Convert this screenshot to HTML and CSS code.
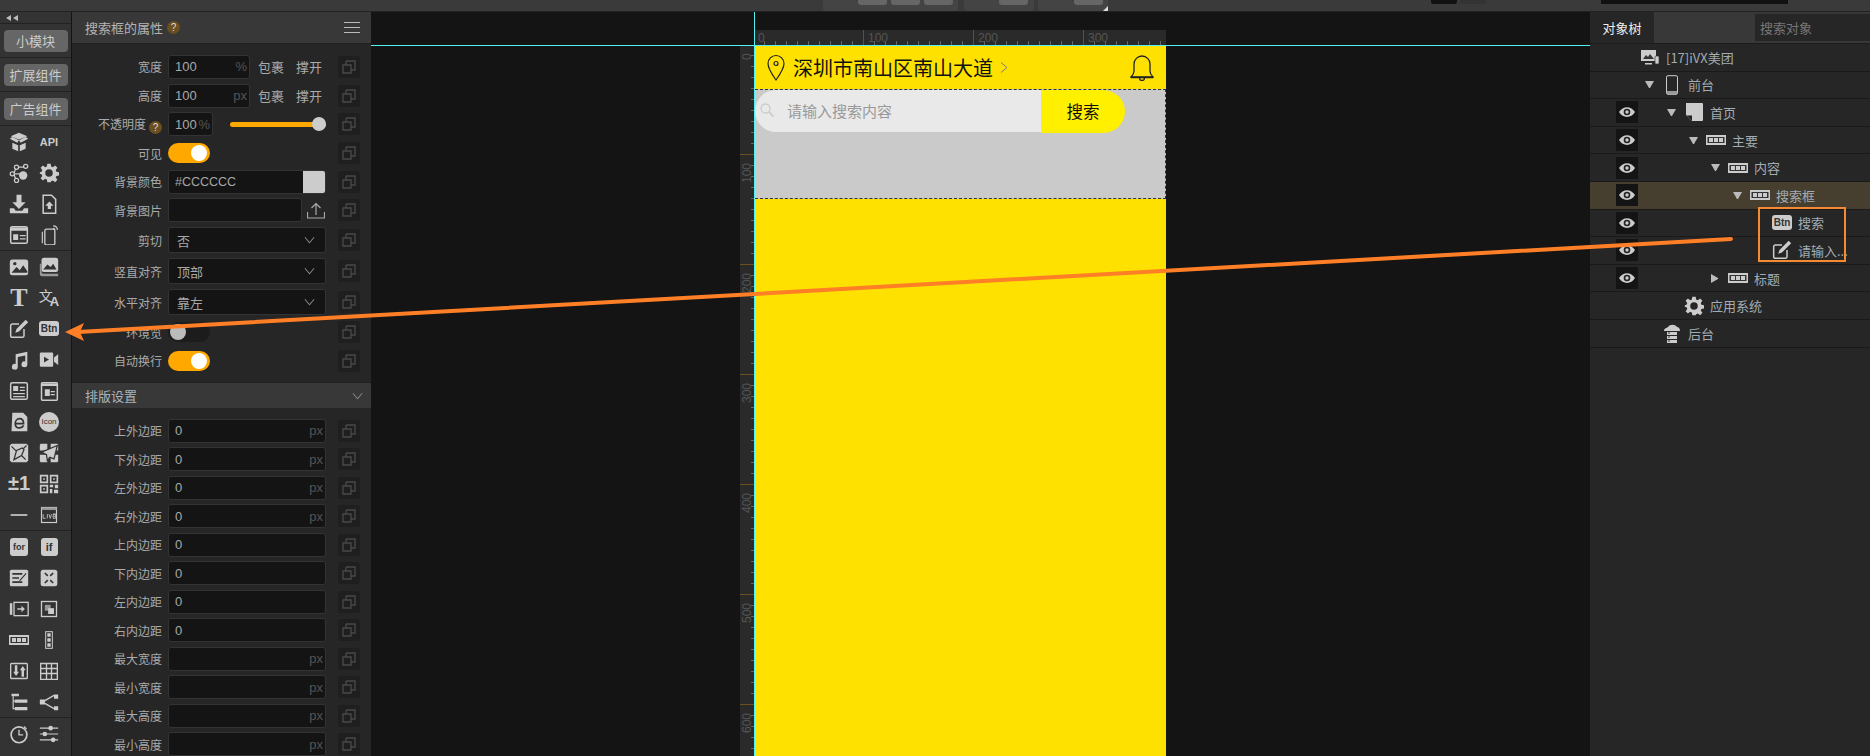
FILE: index.html
```html
<!DOCTYPE html>
<html lang="en">
<head>
    <meta charset="UTF-8">
    <title>iVX</title>
    <link rel="stylesheet" href="styles.css">
</head>
<body>
<svg class="defs" width="0" height="0">
    <symbol id="copy" viewBox="0 0 22 22"><path d="M8 5h9v9h-4M5 9h8v8H5zM8 5v4" fill="none" stroke="#4a4a4a" stroke-width="1.3"/></symbol>
    <symbol id="eye" viewBox="0 0 22 22"><path d="M3 11c4-6.500 12-6.500 16 0-4 6.500-12 6.500-16 0z" fill="#ccc"/><circle cx="11" cy="11" r="3.300" fill="#222"/><circle cx="11" cy="11" r="1.700" fill="#ccc"/></symbol>
    <symbol id="chev" viewBox="0 0 12 8"><path d="M1 1l5 6 5-6" fill="none" stroke="#888" stroke-width="1.100"/></symbol>
    <symbol id="gear" viewBox="0 0 24 24"><path fill="#ccc" fill-rule="evenodd" d="M10 1h4l.6 3.200 2 .8L19.300 3l2.800 2.800-2 2.700.8 2 3.100.5v4l-3.100.5-.8 2 2 2.700-2.800 2.800-2.700-2-2 .8L14 23h-4l-.6-3.200-2-.8L4.700 21l-2.800-2.800 2-2.700-.8-2L1 13v-2l2.100-.5.8-2-2-2.700L4.700 3l2.700 2 2-.8zM12 7.500a4.500 4.500 0 1 0 0 9 4.500 4.500 0 0 0 0-9z"/></symbol>
    <symbol id="edit" viewBox="0 0 24 24"><path d="M18 12v8a2 2 0 0 1-2 2H4a2 2 0 0 1-2-2V8a2 2 0 0 1 2-2h8" fill="none" stroke="#ccc" stroke-width="1.800"/><path d="M20 1l3 3-11 11-4.500 1.500L9 12z" fill="#ccc"/></symbol>
    <symbol id="dots" viewBox="0 0 20 10"><path d="M0 0h20v10H0z" fill="#ccc"/><path d="M1.500 2h17v6h-17z" fill="#333"/><path d="M3 3h4v4H3zM8 3h4v4H8zM13 3h4v4h-4z" fill="#ccc"/></symbol>
</svg>

<div class="topbar">
    <div class="tool-group group-a"><i></i><i></i><i></i></div>
    <div class="tool-group group-b"><i></i></div>
    <div class="tool-group group-c"><i></i><b></b></div>
    <div class="top-right"><span class="sw-black"></span><span class="sw-grey"></span><span class="top-input"></span></div>
</div>

<div class="main">
    <div class="rail">
        <div class="rail-top"><svg width="14" height="6" viewBox="0 0 14 6"><path d="M5 0v6L0 3zM12 0v6L7 3z" fill="#bbb"/></svg></div>
        <div class="rail-sec"><button class="rail-btn">小模块</button></div>
        <div class="rail-sec"><button class="rail-btn">扩展组件</button></div>
        <div class="rail-sec"><button class="rail-btn">广告组件</button></div>

        <div class="icon-grid">
            <span><svg viewBox="0 0 24 24"><path d="M12 1l10 4-10 4L2 5zM1 8l3-2 8 4-2 3zM23 8l-3-2-8 4 2 3zM4 13l7 3v7l-7-3zM20 13l-7 3v7l7-3z" fill="#ccc"/></svg></span>
            <span class="txt-api">API</span>
            <span><svg viewBox="0 0 24 24"><g fill="none" stroke="#ccc" stroke-width="1.500"><circle cx="4" cy="13" r="2.500"/><circle cx="9" cy="5" r="2.500"/><circle cx="20" cy="4" r="2.500"/><circle cx="9" cy="21" r="2.500"/><path d="M6 12l2-5M11 5h7M6 14l2 5M7 13h7"/></g><circle cx="17" cy="15" r="5" fill="#ccc"/></svg></span>
            <span><svg><use href="#gear"/></svg></span>
            <span><svg viewBox="0 0 24 24"><path d="M9 1h6v9h5l-8 8-8-8h5zM1 17h5l2 3h8l2-3h5v6H1z" fill="#ccc"/></svg></span>
            <span><svg viewBox="0 0 24 24"><path d="M5 1.500h10l5 5V23H5z" fill="none" stroke="#ccc" stroke-width="1.800"/><path d="M12.500 9l5 5h-3v4h-4v-4h-3z" fill="#ccc"/></svg></span>
            <span><svg viewBox="0 0 24 24"><rect x="2" y="2" width="20" height="20" rx="2" fill="none" stroke="#ccc" stroke-width="1.800"/><path d="M2 3h20v4H2zM5 11h6v7H5zM13 12h7v1.500h-7zM13 16h7v1.500h-7z" fill="#ccc"/></svg></span>
            <span><svg viewBox="0 0 24 24"><rect x="7" y="5" width="12" height="19" rx="2" fill="none" stroke="#ccc" stroke-width="1.600"/><path d="M4 8v14M17 1c3 0 5 2 5 5M17 4c1 0 2 1 2 2" fill="none" stroke="#ccc" stroke-width="1.400"/></svg></span>
        </div>

        <div class="icon-grid sec-long">
            <span><svg viewBox="0 0 24 24"><rect x="1" y="3" width="22" height="19" rx="3" fill="#ccc"/><path d="M3 19l6-7 4 4 4-6 5 7v2H3z" fill="#333"/><circle cx="7" cy="8" r="2" fill="#333"/></svg></span>
            <span><svg viewBox="0 0 24 24"><rect x="3" y="1" width="20" height="17" rx="3" fill="#ccc"/><path d="M5 15l5-6 4 3 3-4 4 7z" fill="#333"/><path d="M1 8v12c0 2 1 3 3 3h19v-3H5c-1 0-2-1-2-2V8z" fill="#999"/></svg></span>
            <span class="txt-t">T</span>
            <span class="txt-tr"><b>文</b><small>A</small></span>
            <span><svg><use href="#edit"/></svg></span>
            <span><em class="chip chip-btn">Btn</em></span>
            <span><svg viewBox="0 0 24 24"><path d="M8 5l14-3v15a3.500 3.500 0 1 1-2.500-3.300V6.500l-9 2V20a3.500 3.500 0 1 1-2.500-3.300z" fill="#ccc"/></svg></span>
            <span><svg viewBox="0 0 24 24"><rect x="1" y="3" width="16" height="17" rx="1.500" fill="#ccc"/><path d="M6 8l6 3.500L6 15z" fill="#333"/><path d="M18 9l5-4v13l-5-4z" fill="#ccc"/></svg></span>
            <span><svg viewBox="0 0 24 24"><rect x="2" y="2" width="20" height="20" rx="2" fill="none" stroke="#ccc" stroke-width="1.800"/><path d="M5 6h6v6H5zM13 7h6v1.500h-6zM13 10.500h6V12h-6zM5 14.500h14V16H5zM5 18h14v1.500H5z" fill="#ccc"/></svg></span>
            <span><svg viewBox="0 0 24 24"><rect x="3" y="2" width="19" height="21" rx="1" fill="none" stroke="#ccc" stroke-width="1.800"/><path d="M3 3h19v3H3zM7 10h6v8H7zM14 12h5v1.500h-5zM14 15.500h5V17h-5z" fill="#ccc"/></svg></span>
            <span><svg viewBox="0 0 24 24"><path d="M4 1h13l5 5v17H3z" fill="#ccc"/><path d="M7.500 14h10c0-4-2-6-5-6s-5 3-5 6 2 5 5 5c2 0 4-1 5-3" fill="none" stroke="#333" stroke-width="2"/></svg></span>
            <span><em class="chip chip-icon">Icon</em></span>
            <span><svg viewBox="0 0 24 24"><path d="M3 1h18l2 2v18l-2 2H3l-2-2V3z" fill="#ccc"/><path d="M6 20l3-11 7-3 2 2-3 7zM3 4l6 6M20 20l-5-5M21 3l-4 4" fill="none" stroke="#333" stroke-width="1.500"/></svg></span>
            <span><svg viewBox="0 0 24 24"><path d="M2 1h8v8H1V2zM14 1h8l1 1v7h-9zM1 14h9v9H2l-1-1zM14 14h9v8l-1 1h-8z" fill="#ccc"/><path d="M22 3L3 11l6 3 1 7 3-4 5 2z" fill="#ccc" stroke="#333" stroke-width="1.500"/></svg></span>
            <span class="txt-pm">±1</span>
            <span><svg viewBox="0 0 24 24"><g fill="none" stroke="#ccc" stroke-width="2"><path d="M2 2h8v8H2zM14 2h8v8h-8zM2 14h8v8H2z"/></g><path d="M5 5h2v2H5zM17 5h2v2h-2zM5 17h2v2H5zM13 13h4v3h-4zM19 13h4v4h-4zM13 18h3v5h-3zM18 19h5v4h-5z" fill="#ccc"/></svg></span>
            <span><svg viewBox="0 0 24 24"><path d="M2 11h20v2H2z" fill="#ccc"/></svg></span>
            <span><svg viewBox="0 0 24 24"><rect x="3" y="3" width="18" height="18" fill="none" stroke="#ccc" stroke-width="1.400"/><path d="M3 3h18v3H3z" fill="#999"/><path d="M5 11v5h3M10 11v5M12 11l1.500 5 1.500-5M17 11h3M17 13.500h3M17 16h3v-5h-3v5" fill="none" stroke="#ccc" stroke-width="1"/></svg></span>
        </div>

        <div class="icon-grid">
            <span><em class="chip chip-for">for</em></span>
            <span><em class="chip chip-if">if</em></span>
            <span><svg viewBox="0 0 24 24"><rect x="1" y="2" width="22" height="20" rx="2" fill="#ccc"/><path d="M4 6h12v2H4zM4 11h8v2H4zM4 16h12v2H4zM20 6l1 1-7 8-2 1 1-2z" fill="#333"/></svg></span>
            <span><svg viewBox="0 0 24 24"><rect x="2" y="2" width="20" height="20" rx="3" fill="#ccc"/><path d="M7 6l3.500 3.500M17 6l-3.500 3.500M7 18l3.500-3.500M17 18l-3.500-3.500" stroke="#333" stroke-width="2"/></svg></span>
            <span><svg viewBox="0 0 24 24"><path d="M1 5h3v14H1z" fill="#ccc"/><rect x="6" y="4" width="17" height="16" fill="none" stroke="#ccc" stroke-width="1.600"/><path d="M10 11h5V8l4 4-4 4v-3h-5z" fill="#ccc"/></svg></span>
            <span><svg viewBox="0 0 24 24"><rect x="3" y="3" width="18" height="18" fill="none" stroke="#ccc" stroke-width="1.600"/><path d="M7 7h7v7H7z" fill="#999"/><path d="M11 11h7v7h-7z" fill="#ccc"/></svg></span>
            <span><svg class="wide"><use href="#dots"/></svg></span>
            <span><svg viewBox="0 0 24 24"><rect x="8" y="2" width="8" height="20" fill="none" stroke="#ccc" stroke-width="1.200"/><path d="M10 4h4v4h-4zM10 10h4v4h-4zM10 16h4v4h-4z" fill="#ccc"/></svg></span>
            <span><svg viewBox="0 0 24 24"><rect x="2" y="3" width="20" height="18" rx="1" fill="none" stroke="#ccc" stroke-width="1.600"/><path d="M7 5h3v8h2l-3.500 5L5 13h2zM15 19h3v-8h2l-3.500-5L13 11h2z" fill="#ccc"/></svg></span>
            <span><svg viewBox="0 0 24 24"><path d="M2 3h20v19H2zM9 3v19M15 3v19M2 9h20M2 15h20" fill="none" stroke="#ccc" stroke-width="1.600"/></svg></span>
            <span><svg viewBox="0 0 24 24"><path d="M3 2h9v3H3zM7 9h15v4H7zM7 18h15v4H7z" fill="#ccc"/><path d="M5 5v15h2M5 11h2" fill="none" stroke="#ccc" stroke-width="1.400"/></svg></span>
            <span><svg viewBox="0 0 24 24"><path d="M18 3h5v5h-5zM18 17h5v5h-5zM1 9h6v6H1z" fill="#ccc"/><path d="M6 11l12-7M6 13l12 7" stroke="#ccc" stroke-width="1.600"/></svg></span>
        </div>

        <div class="icon-grid">
            <span><svg viewBox="0 0 24 24"><circle cx="12" cy="13" r="9.500" fill="none" stroke="#ccc" stroke-width="2"/><path d="M12 7v6h5M18 3l3 3" fill="none" stroke="#ccc" stroke-width="1.600"/></svg></span>
            <span><svg viewBox="0 0 24 24"><path d="M1 5h22M1 12h22M1 19h22" stroke="#ccc" stroke-width="1.400"/><circle cx="14" cy="5" r="2.800" fill="#ccc"/><circle cx="7" cy="12" r="2.800" fill="#ccc"/><circle cx="17" cy="19" r="2.800" fill="#ccc"/></svg></span>
            <span><svg viewBox="0 0 24 24"><rect x="3" y="3" width="18" height="18" rx="3" fill="none" stroke="#ccc" stroke-width="1.800"/></svg></span>
            <span><svg viewBox="0 0 24 24"><path d="M12 3v18M3 12h18" stroke="#ccc" stroke-width="1.800"/></svg></span>
        </div>
    </div>

    <div class="props">
        <div class="panel-head">
            <span>搜索框的属性</span><em class="help">?</em>
            <svg class="menu" width="16" height="11" viewBox="0 0 16 11"><path d="M0 .5h16M0 5.500h16M0 10.500h16" stroke="#bbb"/></svg>
        </div>
        <div class="prop-list">
            <div class="prop"><label>宽度</label><div class="prop-wrap"><div class="field w82">100<span class="unit">%</span></div><span class="opt">包裹</span><span class="opt">撑开</span></div><span class="copy"><svg><use href="#copy"/></svg></span></div>
            <div class="prop"><label>高度</label><div class="prop-wrap"><div class="field w82">100<span class="unit">px</span></div><span class="opt">包裹</span><span class="opt">撑开</span></div><span class="copy"><svg><use href="#copy"/></svg></span></div>
            <div class="prop"><label>不透明度<em class="help small">?</em></label><div class="prop-wrap"><div class="field w45">100<span class="unit">%</span></div><div class="slider"><i></i></div></div><span class="copy"><svg><use href="#copy"/></svg></span></div>
            <div class="prop"><label>可见</label><div class="toggle on"><i></i></div><span class="copy"><svg><use href="#copy"/></svg></span></div>
            <div class="prop"><label>背景颜色</label><div class="field color">#CCCCCC<span class="swatch"></span></div><span class="copy"><svg><use href="#copy"/></svg></span></div>
            <div class="prop"><label>背景图片</label><div class="prop-wrap"><div class="field w134"></div><svg class="upload" width="18" height="17" viewBox="0 0 18 17"><path d="M9 13V1.500M4.500 6L9 1.500 13.500 6M.5 10v6h17v-6" fill="none" stroke="#aaa" stroke-width="1.200"/></svg></div><span class="copy"><svg><use href="#copy"/></svg></span></div>
            <div class="prop tall"><label>剪切</label><div class="field select">否<svg class="chev"><use href="#chev"/></svg></div><span class="copy"><svg><use href="#copy"/></svg></span></div>
            <div class="prop tall"><label>竖直对齐</label><div class="field select">顶部<svg class="chev"><use href="#chev"/></svg></div><span class="copy"><svg><use href="#copy"/></svg></span></div>
            <div class="prop tall"><label>水平对齐</label><div class="field select">靠左<svg class="chev"><use href="#chev"/></svg></div><span class="copy"><svg><use href="#copy"/></svg></span></div>
            <div class="prop"><label>环境览</label><div class="toggle"><i></i></div><span class="copy"><svg><use href="#copy"/></svg></span></div>
            <div class="prop"><label>自动换行</label><div class="toggle on"><i></i></div><span class="copy"><svg><use href="#copy"/></svg></span></div>
        </div>
        <div class="sec-head"><span>排版设置</span><svg class="chev"><use href="#chev"/></svg></div>
        <div class="prop-list layout-list">
            <div class="prop"><label>上外边距</label><div class="field">0<span class="unit">px</span></div><span class="copy"><svg><use href="#copy"/></svg></span></div>
            <div class="prop"><label>下外边距</label><div class="field">0<span class="unit">px</span></div><span class="copy"><svg><use href="#copy"/></svg></span></div>
            <div class="prop"><label>左外边距</label><div class="field">0<span class="unit">px</span></div><span class="copy"><svg><use href="#copy"/></svg></span></div>
            <div class="prop"><label>右外边距</label><div class="field">0<span class="unit">px</span></div><span class="copy"><svg><use href="#copy"/></svg></span></div>
            <div class="prop"><label>上内边距</label><div class="field">0</div><span class="copy"><svg><use href="#copy"/></svg></span></div>
            <div class="prop"><label>下内边距</label><div class="field">0</div><span class="copy"><svg><use href="#copy"/></svg></span></div>
            <div class="prop"><label>左内边距</label><div class="field">0</div><span class="copy"><svg><use href="#copy"/></svg></span></div>
            <div class="prop"><label>右内边距</label><div class="field">0</div><span class="copy"><svg><use href="#copy"/></svg></span></div>
            <div class="prop"><label>最大宽度</label><div class="field"><span class="unit">px</span></div><span class="copy"><svg><use href="#copy"/></svg></span></div>
            <div class="prop"><label>最小宽度</label><div class="field"><span class="unit">px</span></div><span class="copy"><svg><use href="#copy"/></svg></span></div>
            <div class="prop"><label>最大高度</label><div class="field"><span class="unit">px</span></div><span class="copy"><svg><use href="#copy"/></svg></span></div>
            <div class="prop"><label>最小高度</label><div class="field"><span class="unit">px</span></div><span class="copy"><svg><use href="#copy"/></svg></span></div>
        </div>
    </div>

    <div class="canvas">
        <div class="guide-h"></div>
        <div class="guide-v"></div>
        <div class="ruler-h"><span>0</span><span>100</span><span>200</span><span>300</span></div>
        <div class="stage">
            <div class="ruler-v"><span>0</span><span>100</span><span>200</span><span>300</span><span>400</span><span>500</span><span>600</span></div>
            <div class="phone">
                <div class="app-head">
                    <svg class="pin" width="18" height="27" viewBox="0 0 18 27"><path d="M9 26C4 19 1 14 1 9.500a8 8 0 0 1 16 0C17 14 14 19 9 26z" fill="none" stroke="#222" stroke-width="1.200"/><circle cx="9" cy="9.500" r="2" fill="none" stroke="#222" stroke-width="1.200"/></svg>
                    <span class="addr">深圳市南山区南山大道</span>
                    <svg class="addr-arrow" width="8" height="11" viewBox="0 0 8 11"><path d="M1 .5l6 5-6 5" fill="none" stroke="#777"/></svg>
                    <svg class="bell" width="24" height="27" viewBox="0 0 24 27"><path d="M1 23c2-2 3-3 3-6V10a8 8 0 0 1 16 0v7c0 3 1 4 3 6z" fill="none" stroke="#222" stroke-width="1.300"/><path d="M1 23.500h22M9.500 24a2.500 2.500 0 0 0 5 0" fill="none" stroke="#222" stroke-width="1.300"/></svg>
                </div>
                <div class="search-box">
                    <div class="search-row">
                        <div class="search-input">
                            <svg width="14" height="14" viewBox="0 0 14 14"><circle cx="5.500" cy="5.500" r="4.500" fill="none" stroke="#ccc" stroke-width="1.300"/><path d="M9 9l4.500 4.500" stroke="#ccc" stroke-width="1.800"/></svg>
                            <span>请输入搜索内容</span>
                        </div>
                        <div class="search-btn">搜索</div>
                    </div>
                </div>
            </div>
        </div>
    </div>

    <div class="tree-panel">
        <div class="tree-head">
            <div class="tree-tab">对象树</div>
            <div class="tree-search">搜索对象</div>
        </div>
        <div class="tree-row">
            <div class="tree-body lvl0"><span class="tri none"></span><span class="node"><svg viewBox="0 0 20 16"><path d="M1 1h15v11H1z" fill="#ccc"/><path d="M3 10l3-4 2 2 2-3 4 5z" fill="#333"/><path d="M5 14h7v1.500H5z" fill="#ccc"/><rect x="15" y="7" width="4" height="8" rx="1" fill="#ccc" stroke="#333" stroke-width=".7"/></svg></span><span class="name">[17]iVX美团</span></div>
        </div>
        <div class="tree-row">
            <div class="tree-body lvl1"><span class="tri"></span><span class="node"><svg viewBox="0 0 20 20"><rect x="4.500" y=".7" width="11" height="18.600" rx="1.500" fill="none" stroke="#ccc" stroke-width="1"/><path d="M5 16h10v3H5z" fill="#999"/></svg></span><span class="name">前台</span></div>
        </div>
        <div class="tree-row">
            <span class="eye"><svg><use href="#eye"/></svg></span>
            <div class="tree-body lvl2"><span class="tri"></span><span class="node"><svg viewBox="0 0 20 20"><path d="M2 1h16a1 1 0 0 1 1 1v16a1 1 0 0 1-1 1H8l-6-6z" fill="#ccc"/><path d="M2.500 13.500H8V19z" fill="#222"/></svg></span><span class="name">首页</span></div>
        </div>
        <div class="tree-row">
            <span class="eye"><svg><use href="#eye"/></svg></span>
            <div class="tree-body lvl3"><span class="tri"></span><span class="node"><svg class="flat"><use href="#dots"/></svg></span><span class="name">主要</span></div>
        </div>
        <div class="tree-row">
            <span class="eye"><svg><use href="#eye"/></svg></span>
            <div class="tree-body lvl4"><span class="tri"></span><span class="node"><svg class="flat"><use href="#dots"/></svg></span><span class="name">内容</span></div>
        </div>
        <div class="tree-row active">
            <span class="eye"><svg><use href="#eye"/></svg></span>
            <div class="tree-body lvl5"><span class="tri"></span><span class="node"><svg class="flat"><use href="#dots"/></svg></span><span class="name">搜索框</span></div>
        </div>
        <div class="tree-row">
            <span class="eye"><svg><use href="#eye"/></svg></span>
            <div class="tree-body lvl6"><span class="tri none"></span><span class="node"><em class="chip chip-btn">Btn</em></span><span class="name">搜索</span></div>
        </div>
        <div class="tree-row">
            <span class="eye"><svg><use href="#eye"/></svg></span>
            <div class="tree-body lvl6"><span class="tri none"></span><span class="node"><svg><use href="#edit"/></svg></span><span class="name">请输入...</span></div>
        </div>
        <div class="tree-row">
            <span class="eye"><svg><use href="#eye"/></svg></span>
            <div class="tree-body lvl4"><span class="tri closed"></span><span class="node"><svg class="flat"><use href="#dots"/></svg></span><span class="name">标题</span></div>
        </div>
        <div class="tree-row">
            <div class="tree-body lvl2"><span class="tri none"></span><span class="node"><svg><use href="#gear"/></svg></span><span class="name">应用系统</span></div>
        </div>
        <div class="tree-row">
            <div class="tree-body lvl1"><span class="tri none"></span><span class="node"><svg viewBox="0 0 20 20"><path d="M2 8c0-3 3-3 4-4 2-3 7-3 9 0 2 0 3 2 3 4z" fill="#ccc"/><path d="M5 9h10v3H5zM5 13h10v3H5zM5 17h10v3H5z" fill="#ccc"/><path d="M6 10h2M6 14h2M6 18h2" stroke="#333"/></svg></span><span class="name">后台</span></div>
        </div>
    </div>
</div>

<svg class="annot" width="1870" height="756" viewBox="0 0 1870 756">
    <rect x="1759" y="208" width="86" height="53" fill="none" stroke="#F58A33" stroke-width="2"/>
    <path d="M1731 239L78 332" stroke="#FF7F27" stroke-width="4" stroke-linecap="round"/>
    <path d="M65 332l19-9-4 9 4 9z" fill="#FF7F27"/>
</svg>
</body>
</html>
```

FILE: styles.css
```css
* {
    box-sizing: border-box;
}
body {
    margin: 0;
    height: 100vh;
    overflow: hidden;
    display: flex;
    flex-direction: column;
    position: relative;
    background: #141414;
    font-family: "Noto Sans CJK SC", "Liberation Sans", sans-serif;
    font-size: 12px;
    color: #aaa;
}
.defs {
    position: absolute;
}
em {
    font-style: normal;
}

/* top bar */
.topbar {
    height: 12px;
    flex: none;
    background: #3a3a3a;
    border-bottom: 1px solid #222;
    display: flex;
    align-items: flex-start;
    padding-left: 823px;
}
.tool-group {
    height: 11px;
    background: #444;
    border-radius: 0 0 3px 3px;
    display: flex;
    position: relative;
}
.tool-group i {
    width: 29px;
    height: 5px;
    background: #666;
    border-radius: 0 0 3px 3px;
}
.group-a {
    width: 135px;
    padding-left: 35px;
    gap: 4px;
}
.group-b {
    width: 70px;
    margin-left: 6px;
    padding-left: 35px;
}
.group-c {
    width: 70px;
    margin-left: 4px;
    padding-left: 36px;
}
.tool-group b {
    position: absolute;
    right: 0;
    bottom: 0;
    border-left: 5px solid transparent;
    border-bottom: 5px solid #ddd;
}
.top-right {
    margin-left: 323px;
    display: flex;
    gap: 3px;
}
.sw-black, .sw-grey {
    width: 26px;
    height: 4px;
    background: #111;
    border-radius: 0 0 2px 2px;
}
.sw-grey {
    background: #333;
}
.top-input {
    width: 187px;
    height: 4px;
    margin-left: 112px;
    background: #111;
}

.main {
    flex: 1;
    display: flex;
    min-height: 0;
}

/* left rail */
.rail {
    width: 71px;
    flex: none;
    margin-right: 1px;
    background: #333;
    overflow: hidden;
}
.rail-top {
    height: 12px;
    border-bottom: 1px solid #222;
    padding-left: 6px;
    display: flex;
    align-items: center;
}
.rail-sec {
    height: 34px;
    border-bottom: 1px solid #222;
    display: flex;
    align-items: center;
    justify-content: center;
}
.rail-btn {
    width: 64px;
    height: 22px;
    padding: 0;
    border: none;
    border-radius: 4px;
    background: #666;
    color: #ccc;
    font: 13px "Noto Sans CJK SC", sans-serif;
}
.icon-grid {
    display: grid;
    grid-template-columns: 30px 30px;
    grid-auto-rows: 31px;
    padding-left: 4px;
    border-bottom: 1px solid #222;
}
.icon-grid span {
    display: flex;
    align-items: center;
    justify-content: center;
    color: #ccc;
    font-family: "Liberation Sans", sans-serif;
    font-weight: bold;
}
.icon-grid svg {
    width: 20px;
    height: 20px;
}
.icon-grid svg.wide {
    height: 10px;
}
.txt-api {
    font-size: 11px;
}
.txt-t {
    font-family: "Liberation Serif", serif !important;
    font-size: 26px;
}
.txt-tr {
    line-height: 1;
}
.txt-tr b {
    margin-top: -6px;
    font: 14px "Noto Sans CJK SC", sans-serif;
}
.txt-tr small {
    font: bold 13px "Liberation Sans", sans-serif;
    margin: 8px 0 0 -3px;
}
.txt-pm {
    font-size: 20px;
    white-space: nowrap;
}
.chip {
    display: flex;
    align-items: center;
    justify-content: center;
    background: #ccc;
    color: #333;
    font-family: "Liberation Sans", sans-serif;
    font-weight: bold;
}
.chip-btn {
    width: 20px;
    height: 15px;
    border-radius: 3px;
    font-size: 10px;
}
.chip-icon {
    width: 20px;
    height: 20px;
    border-radius: 50%;
    font-size: 8px;
    font-weight: normal;
}
.chip-for, .chip-if {
    width: 18px;
    height: 18px;
    border-radius: 3px;
    font-size: 9px;
}
.chip-if {
    width: 17px;
    font-size: 11px;
}

/* properties */
.props {
    width: 299px;
    flex: none;
    background: #262626;
    overflow: hidden;
}
.panel-head {
    height: 32px;
    background: #383838;
    border-bottom: 1px solid #222;
    padding-left: 13px;
    display: flex;
    align-items: center;
    font-size: 13px;
    color: #b4b4b4;
}
.help {
    width: 13px;
    height: 13px;
    margin-left: 4px;
    border-radius: 50%;
    background: #6a4f20;
    color: #ddd;
    font: 10px/13px "Liberation Sans", sans-serif;
    text-align: center;
    display: inline-block;
}
.help.small {
    margin-left: 3px;
    vertical-align: -2px;
}
.menu {
    margin-left: auto;
    margin-right: 11px;
}
.prop-list {
    padding-top: 8.600px;
}
.prop {
    height: 28.7px;
    display: grid;
    grid-template-columns: 90px 158px 22px;
    column-gap: 6px;
    align-items: center;
}
.layout-list .prop {
    height: 28.5px;
}
.prop .copy {
    margin-left: 6px;
}
.prop.tall {
    height: 31px;
}
.prop label {
    text-align: right;
    white-space: nowrap;
    color: #aaa;
}
.prop-wrap {
    display: flex;
    align-items: center;
}
.field {
    height: 24px;
    width: 158px;
    flex: none;
    background: #141414;
    border: 1px solid #333;
    border-radius: 3px;
    padding-left: 6px;
    display: flex;
    align-items: center;
    font: 13px "Liberation Sans", "Noto Sans CJK SC", sans-serif;
    color: #a8a8a8;
}
.unit {
    margin-left: auto;
    padding-right: 2px;
    color: #555;
}
.w82 {
    width: 82px;
}
.w45 {
    width: 45px;
}
.w134 {
    width: 134px;
}
.opt {
    margin-left: 8px;
    margin-right: 4px;
    font-size: 13px;
    color: #aaa;
}
.opt + .opt {
    margin-left: 8px;
}
.slider {
    position: relative;
    width: 97px;
    height: 5px;
    margin-left: 17px;
    border-radius: 3px;
    background: #ffa800;
}
.slider i {
    position: absolute;
    right: 0;
    top: -5px;
    width: 14px;
    height: 14px;
    border-radius: 50%;
    background: #ccc;
}
.toggle {
    width: 42px;
    height: 20px;
    border-radius: 10px;
    background: #1c1c1c;
    padding: 2px;
    display: flex;
}
.toggle i {
    width: 16px;
    height: 16px;
    border-radius: 50%;
    background: #bbb;
}
.toggle.on {
    background: #ffa800;
    justify-content: flex-end;
    padding-right: 3px;
}
.toggle.on i {
    background: #fff;
}
.color {
    position: relative;
    overflow: hidden;
    font-size: 12.500px;
}
.swatch {
    position: absolute;
    right: 0;
    top: 0;
    bottom: 0;
    width: 22px;
    background: #ccc;
}
.upload {
    margin-left: 5px;
}
.select {
    height: 26px;
    justify-content: space-between;
    padding: 0 10px 0 8px;
    font-family: "Noto Sans CJK SC", sans-serif;
}
.chev {
    width: 11px;
    height: 8px;
}
.copy {
    width: 22px;
    height: 22px;
    background: #1f1f1f;
    border-radius: 3px;
}
.copy svg {
    width: 22px;
    height: 22px;
    display: block;
}
.sec-head {
    height: 26px;
    margin-top: 7px;
    background: #383838;
    border-top: 1px solid #222;
    padding: 0 8px 0 13px;
    display: flex;
    align-items: center;
    justify-content: space-between;
    font-size: 13px;
    color: #a9b4bd;
}

/* canvas */
.canvas {
    flex: 1;
    position: relative;
    overflow: hidden;
    padding: 18px 0 0 369px;
    background: #141414;
}
.guide-h {
    position: absolute;
    left: 0;
    right: 0;
    top: 33px;
    height: 1px;
    background: #55f0f0;
    z-index: 2;
}
.guide-v {
    position: absolute;
    left: 383px;
    top: 0;
    bottom: 0;
    width: 1px;
    background: #55f0f0;
    z-index: 2;
}
.ruler-h {
    width: 411px;
    height: 15px;
    margin-left: 15px;
    display: flex;
    overflow: hidden;
    background:
        linear-gradient(to right, #6b4f1c 1px, transparent 1px) -2px 0 / 110px 100% repeat-x,
        linear-gradient(to right, #666 1px, transparent 1px) -2px 100% / 11px 4px repeat-x,
        #2a2a2a;
}
.ruler-h span {
    flex: none;
    width: 110px;
    padding-left: 5px;
    position: relative;
    left: -2px;
    font: 12px/17px "Liberation Sans", sans-serif;
    color: #555;
}
.stage {
    display: flex;
    height: 711px;
}
.ruler-v {
    width: 15px;
    flex: none;
    overflow: hidden;
    background:
        linear-gradient(#6b4f1c 1px, transparent 1px) 0 -1px / 100% 110px repeat-y,
        linear-gradient(#666 1px, transparent 1px) 100% -1px / 4px 11px repeat-y,
        #2a2a2a;
}
.ruler-v span {
    display: block;
    height: 110px;
    padding-bottom: 9px;
    position: relative;
    top: -1px;
    writing-mode: vertical-rl;
    transform: rotate(180deg);
    text-align: right;
    font: 12px/15px "Liberation Sans", sans-serif;
    color: #555;
}
.phone {
    width: 411px;
    flex: none;
    background: #ffe100;
}
.app-head {
    height: 44px;
    padding: 0 12px;
    display: flex;
    align-items: center;
}
.pin {
    flex: none;
}
.addr {
    margin-left: 8px;
    font-size: 20px;
    color: #111;
    white-space: nowrap;
}
.addr-arrow {
    margin-left: 7px;
}
.bell {
    margin-left: auto;
}
.search-box {
    height: 110px;
    background: #cacaca;
    border-top: 1px dashed #333;
    border-bottom: 1px dashed #333;
    border-right: 1px dashed #333;
}
.search-row {
    display: flex;
    align-items: flex-start;
    height: 43px;
}
.search-input {
    width: 286px;
    height: 42px;
    background: #e9e9e9;
    border-radius: 21px 0 0 21px;
    padding: 0 0 2px 5px;
    display: flex;
    align-items: center;
    font-size: 15px;
    color: #999;
}
.search-input span {
    margin-left: 13px;
}
.search-btn {
    width: 84px;
    height: 43px;
    background: #fff000;
    border-radius: 0 22px 22px 0;
    padding-bottom: 2px;
    display: flex;
    align-items: center;
    justify-content: center;
    font-size: 16.500px;
    color: #111;
}

/* object tree */
.tree-panel {
    width: 280px;
    flex: none;
    background: #262626;
    overflow: hidden;
}
.tree-head {
    height: 32px;
    background: #383838;
    border-bottom: 1px solid #1c1c1c;
    display: flex;
}
.tree-tab {
    width: 64px;
    background: #262626;
    display: flex;
    align-items: center;
    justify-content: center;
    font-size: 13px;
    color: #eee;
}
.tree-search {
    width: 115px;
    height: 27px;
    margin: 2px 0 0 101px;
    padding-left: 5px;
    background: #262626;
    font-size: 13px;
    line-height: 27px;
    color: #777;
}
.tree-row {
    height: 27.6px;
    display: grid;
    grid-template-columns: 26px 22px 1fr;
    align-items: center;
    border-bottom: 1px solid #1a1a1a;
}
.tree-row.active {
    background: #463e2e;
}
.eye {
    grid-row: 1;
    grid-column: 2;
    width: 22px;
    height: 22px;
    background: #141414;
}
.eye svg {
    width: 22px;
    height: 22px;
    display: block;
}
.tree-body {
    grid-row: 1;
    grid-column: 1 / -1;
    display: flex;
    align-items: center;
    font-size: 13px;
    color: #a2acb4;
}
.lvl0 { padding-left: 33px; }
.lvl1 { padding-left: 55px; }
.lvl2 { padding-left: 77px; }
.lvl3 { padding-left: 99px; }
.lvl4 { padding-left: 121px; }
.lvl5 { padding-left: 143px; }
.lvl6 { padding-left: 165px; }
.tri {
    width: 9px;
    height: 7px;
    margin-right: 8px;
    flex: none;
    border-left: 4.500px solid transparent;
    border-right: 4.500px solid transparent;
    border-top: 7px solid #bbb;
}
.tri.none {
    border: none;
}
.tri.closed {
    height: 9px;
    border-top: 4.500px solid transparent;
    border-bottom: 4.500px solid transparent;
    border-right: none;
    border-left: 7px solid #bbb;
}
.node {
    width: 20px;
    height: 20px;
    margin-right: 6px;
    flex: none;
    display: flex;
    align-items: center;
    justify-content: center;
}
.node svg {
    width: 20px;
    height: 20px;
}
.node svg.flat {
    height: 10px;
}
.name {
    white-space: nowrap;
}

/* annotation drawn on top of the screenshot */
.annot {
    position: absolute;
    left: 0;
    top: 0;
    z-index: 5;
    pointer-events: none;
}
```
